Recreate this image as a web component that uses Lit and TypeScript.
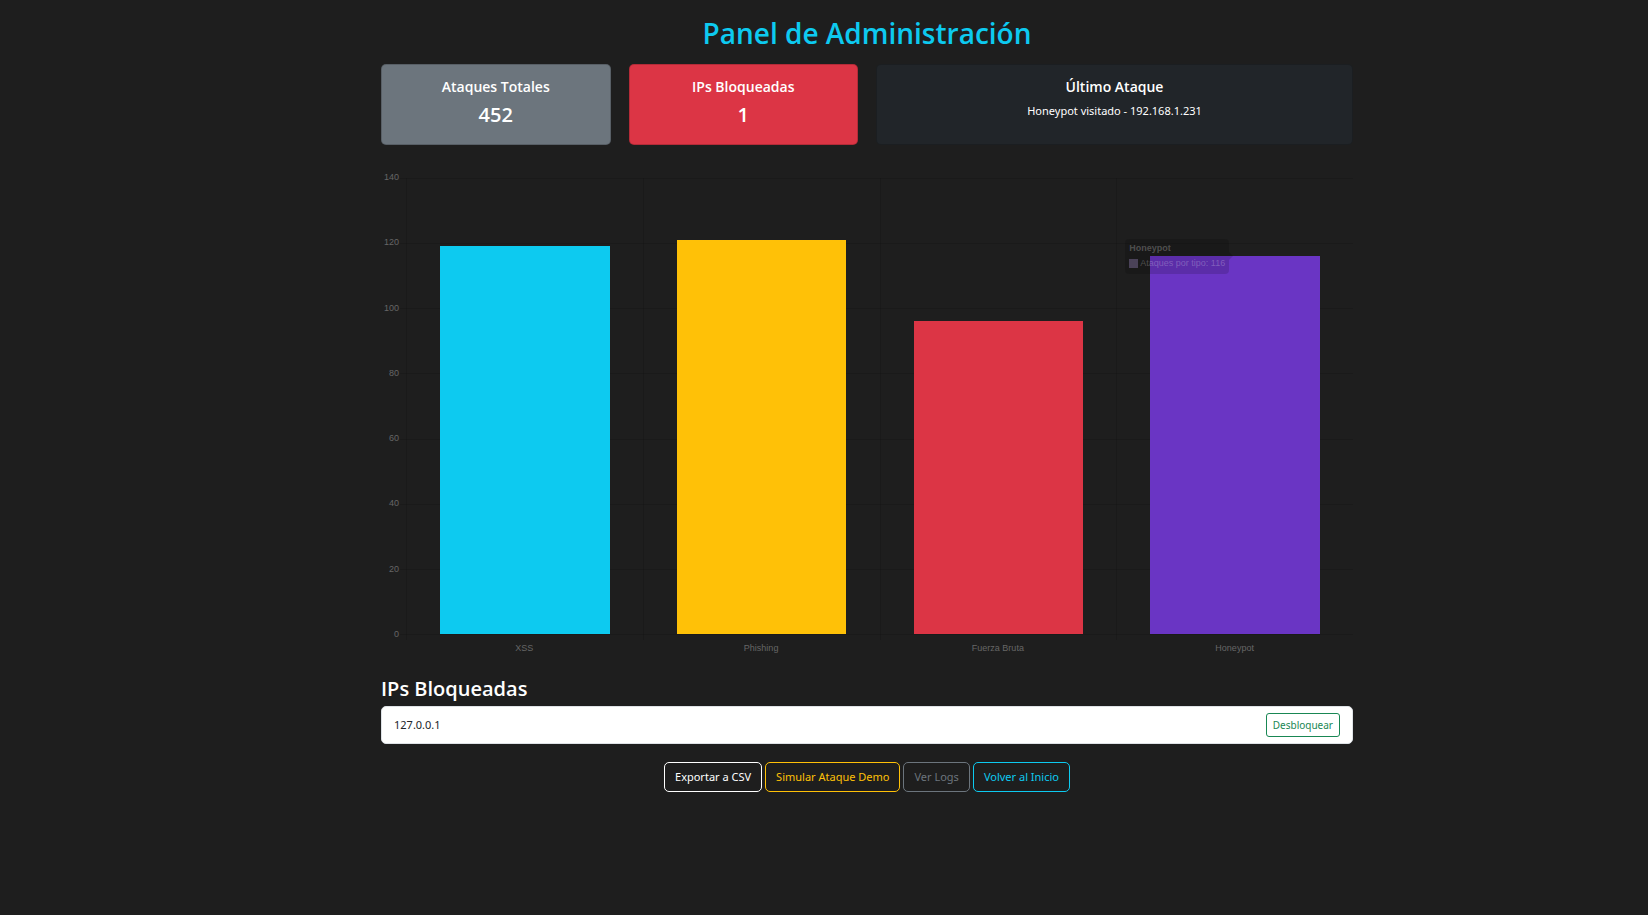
import { LitElement, html, css } from "lit";
import { customElement, property, state } from "lit/decorators.js";
import { styleMap } from "lit/directives/style-map.js";

interface AttackType {
  label: string;
  count: number;
  color: string;
}

@customElement("attack-chart")
class AttackChart extends LitElement {
  @property({ attribute: false }) data: AttackType[] = [];
  @property({ type: Number }) max = 140;
  @property({ type: Number }) step = 20;

  static styles = css`
    :host {
      display: block;
      font-family: "Liberation Sans", Arial, sans-serif;
      font-size: 9px;
      line-height: 10px;
      color: #666;
    }
    .chart {
      display: grid;
      grid-template-columns: 18px 1fr;
      grid-template-rows: 1fr 18px;
      column-gap: 7px;
      row-gap: 6px;
      padding-top: 6px;
      aspect-ratio: 2 / 1;
      box-sizing: border-box;
    }
    .scale {
      display: flex;
      flex-direction: column;
      justify-content: space-between;
      margin: -6px 0 -5px;
      text-align: right;
    }
    .plot {
      display: grid;
      grid-template: 1fr / 1fr;
    }
    .lines,
    .columns {
      grid-area: 1 / 1;
      display: flex;
    }
    .lines {
      flex-direction: column;
      margin-left: -6px;
    }
    .line {
      flex: 1;
      border-top: 1px solid rgba(0, 0, 0, 0.1);
      box-sizing: border-box;
    }
    .baseline {
      border-top: 1px solid rgba(0, 0, 0, 0.1);
      margin-bottom: -1px;
    }
    .column {
      flex: 1;
      display: flex;
      align-items: flex-end;
      justify-content: center;
      border-left: 1px solid rgba(0, 0, 0, 0.1);
      margin-bottom: -6px;
      padding-bottom: 6px;
      box-sizing: border-box;
      position: relative;
    }
    .bar {
      width: 72%;
    }
    .labels {
      grid-column: 2;
      display: flex;
      padding-top: 3px;
      text-align: center;
    }
    .label {
      flex: 1;
    }
    .tooltip {
      position: absolute;
      left: 8px;
      top: 61px;
      padding: 4px 4px 6px;
      border-radius: 4px;
      background: rgba(0, 0, 0, 0.14);
      color: rgba(255, 255, 255, 0.24);
      white-space: nowrap;
    }
    .tooltip::after {
      content: "";
      position: absolute;
      left: 100%;
      top: 13px;
      border: 4px solid transparent;
      border-right: 0;
      border-left-color: rgba(0, 0, 0, 0.14);
    }
    .tip-title {
      font-weight: 700;
      margin-bottom: 5px;
    }
    .tip-row {
      display: flex;
      align-items: center;
      gap: 2px;
    }
    .swatch {
      width: 9px;
      height: 9px;
      background: #4a4258;
    }
  `;

  render() {
    const ticks: number[] = [];
    for (let v = this.max; v >= 0; v -= this.step) ticks.push(v);
    const last = this.data[this.data.length - 1];
    return html`
      <div class="chart" role="img" aria-label="Ataques por tipo">
        <div class="scale">${ticks.map((t) => html`<span>${t}</span>`)}</div>
        <div class="plot">
          <div class="lines">
            ${ticks.slice(1).map(() => html`<div class="line"></div>`)}
            <div class="baseline"></div>
          </div>
          <div class="columns">
            ${this.data.map(
              (d) => html`
                <div class="column">
                  <div
                    class="bar"
                    style=${styleMap({
                      height: `${(d.count / this.max) * 100}%`,
                      background: d.color,
                    })}
                  ></div>
                  ${d === last
                    ? html`<div class="tooltip">
                        <div class="tip-title">${d.label}</div>
                        <div class="tip-row">
                          <span class="swatch"></span>
                          <span>Ataques por tipo: ${d.count}</span>
                        </div>
                      </div>`
                    : null}
                </div>
              `
            )}
          </div>
        </div>
        <div class="labels">
          ${this.data.map((d) => html`<span class="label">${d.label}</span>`)}
        </div>
      </div>
    `;
  }
}

@customElement("app-root")
class AppRoot extends LitElement {
  @state() private blocked = ["127.0.0.1"];

  private attacks: AttackType[] = [
    { label: "XSS", count: 119, color: "#0dcaf0" },
    { label: "Phishing", count: 121, color: "#ffc107" },
    { label: "Fuerza Bruta", count: 96, color: "#dc3545" },
    { label: "Honeypot", count: 116, color: "#6a35c4" },
  ];

  static styles = css`
    :host {
      display: block;
      min-height: 100vh;
      box-sizing: border-box;
      padding-left: 86px;
      background: #1e1e1e;
      color: #fff;
      font-family: "Noto Sans", "Open Sans", sans-serif;
      font-size: 11px;
      line-height: 18px;
    }
    .container {
      max-width: 972px;
      margin: 0 auto;
      padding: 16px 9px;
    }
    h1,
    h2,
    h3,
    p,
    ul {
      margin: 0;
      padding: 0;
    }
    h1,
    h2,
    h3,
    .value {
      font-family: "Open Sans", "Noto Sans", sans-serif;
      font-weight: 600;
    }
    h1 {
      margin-bottom: 14px;
      font-size: 28px;
      line-height: 34px;
      text-align: center;
      color: #0dcaf0;
    }
    .cards {
      display: grid;
      grid-template-columns: repeat(4, 1fr);
      gap: 18px;
      margin-bottom: 27px;
      text-align: center;
    }
    .card {
      padding: 13px 12px 11px;
      border: 1px solid rgba(0, 0, 0, 0.18);
      border-radius: 5px;
    }
    .total {
      background: #6c757d;
    }
    .danger {
      background: #dc3545;
    }
    .last {
      grid-column: span 2;
      background: #212529;
    }
    .card h2 {
      margin-bottom: 6px;
      font-size: 14px;
      line-height: 18px;
    }
    .value {
      margin-bottom: 6px;
      font-size: 20px;
      line-height: 25px;
    }
    h3 {
      margin: 18px 0 5px;
      font-size: 20px;
      line-height: 25px;
    }
    ul {
      list-style: none;
      border: 1px solid #dee2e6;
      border-radius: 5px;
      background: #fff;
      color: #212529;
    }
    li {
      display: flex;
      align-items: center;
      justify-content: space-between;
      padding: 6px 12px;
    }
    .btn {
      display: inline-block;
      box-sizing: border-box;
      padding: 5px 10px;
      border: 1px solid currentColor;
      border-radius: 5px;
      background: transparent;
      font: inherit;
      text-decoration: none;
      cursor: pointer;
    }
    .small {
      padding: 2px 6px;
      border-radius: 3px;
      font-size: 10px;
      color: #198754;
    }
    .actions {
      display: flex;
      flex-wrap: wrap;
      justify-content: center;
      gap: 3px;
      margin-top: 18px;
    }
    .light {
      color: #fff;
    }
    .warning {
      color: #ffc107;
    }
    .secondary {
      color: #6c757d;
    }
    .info {
      color: #0dcaf0;
    }
  `;

  private unblock(ip: string) {
    this.blocked = this.blocked.filter((b) => b !== ip);
  }

  render() {
    const total = this.attacks.reduce((sum, a) => sum + a.count, 0);
    return html`
      <main class="container">
        <h1>Panel de Administración</h1>
        <section class="cards">
          <div class="card total">
            <h2>Ataques Totales</h2>
            <p class="value">${total}</p>
          </div>
          <div class="card danger">
            <h2>IPs Bloqueadas</h2>
            <p class="value">${this.blocked.length}</p>
          </div>
          <div class="card last">
            <h2>Último Ataque</h2>
            <p>Honeypot visitado - 192.168.1.231</p>
          </div>
        </section>
        <attack-chart .data=${this.attacks}></attack-chart>
        <h3>IPs Bloqueadas</h3>
        <ul>
          ${this.blocked.map(
            (ip) => html`
              <li>
                <span>${ip}</span>
                <button class="btn small" @click=${() => this.unblock(ip)}>Desbloquear</button>
              </li>
            `
          )}
        </ul>
        <nav class="actions">
          <a class="btn light" href="#exportar">Exportar a CSV</a>
          <button class="btn warning">Simular Ataque Demo</button>
          <a class="btn secondary" href="#logs">Ver Logs</a>
          <a class="btn info" href="#inicio">Volver al Inicio</a>
        </nav>
      </main>
    `;
  }
}
